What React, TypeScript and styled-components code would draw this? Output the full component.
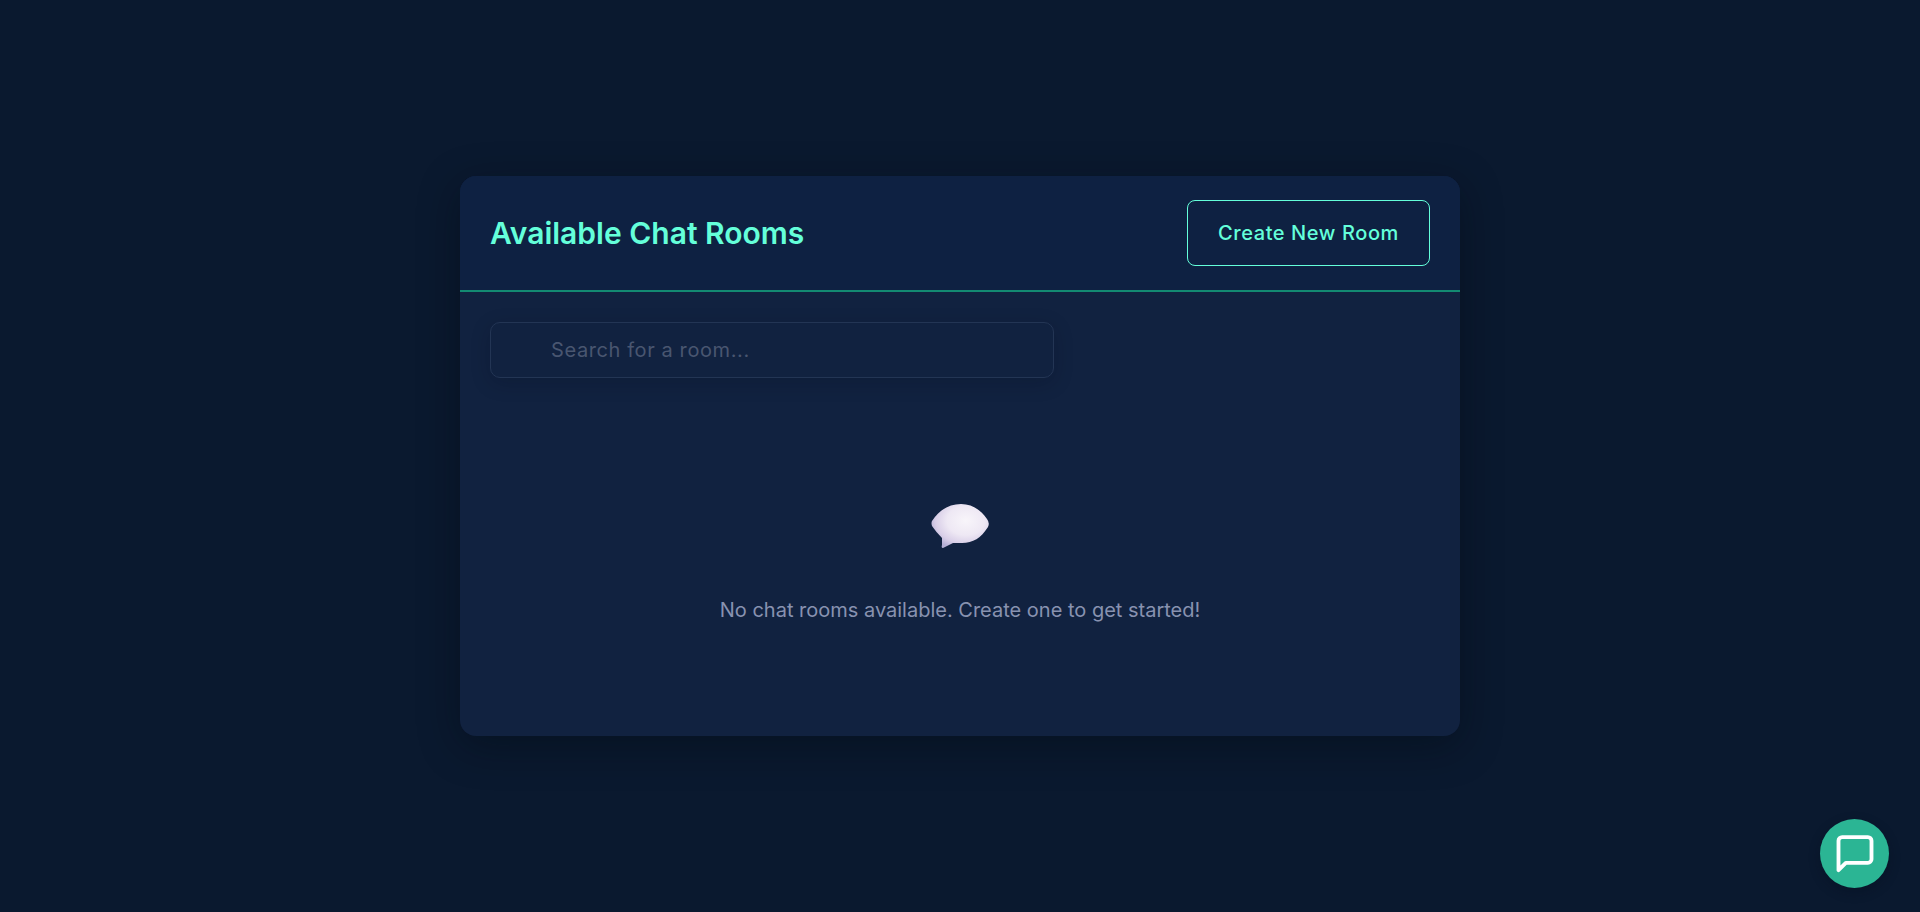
import React from "react";
import styled, { createGlobalStyle } from "styled-components";

const GlobalStyle = createGlobalStyle`
  *, *::before, *::after { box-sizing: border-box; }
  body {
    margin: 0;
    background: #0a192f;
    font-family: Inter, "Liberation Sans", sans-serif;
  }
`;

const Page = styled.main`
  display: flex;
  align-items: center;
  justify-content: center;
  min-height: 100vh;
  padding: 20px;
`;

const Card = styled.section`
  width: 100%;
  max-width: 1000px;
  background: #112240;
  border-radius: 16px;
  overflow: hidden;
  box-shadow: 0 10px 40px rgba(0, 10, 16, 0.4);
`;

const CardHeader = styled.header`
  display: flex;
  align-items: center;
  justify-content: space-between;
  gap: 24px;
  padding: 24px 30px;
  background: #0e2142;
  border-bottom: 2px solid #138a72;
`;

const Title = styled.h1`
  margin: 0;
  color: #64ffda;
  font-size: 30px;
  font-weight: 600;
  line-height: 40px;
`;

const CreateButton = styled.button`
  height: 66px;
  padding: 0 30px;
  border: 1px solid #64ffda;
  border-radius: 8px;
  background: transparent;
  color: #64ffda;
  font: 500 20px/24px Inter, "Liberation Sans", sans-serif;
  letter-spacing: 0.03em;
  cursor: pointer;
`;

const CardBody = styled.div`
  padding: 30px;
`;

const SearchInput = styled.input`
  display: block;
  width: 60%;
  height: 56px;
  padding: 0 60px;
  border: 1px solid #233554;
  border-radius: 10px;
  outline: none;
  background: #112240;
  box-shadow: 0 5px 20px rgba(2, 12, 27, 0.2);
  color: #ccd6f6;
  font: 400 20px/24px Inter, "Liberation Sans", sans-serif;
  letter-spacing: 0.03em;

  &::placeholder {
    color: #495670;
    opacity: 1;
  }
`;

const EmptyState = styled.div`
  display: flex;
  flex-direction: column;
  align-items: center;
  gap: 45px;
  padding: 125px 20px 80px;
`;

const EmptyText = styled.p`
  margin: 0;
  color: #8892b0;
  font-size: 20px;
  line-height: 32px;
  text-align: center;
`;

const ChatFab = styled.button`
  position: fixed;
  right: 31px;
  bottom: 24px;
  display: flex;
  align-items: center;
  justify-content: center;
  width: 69px;
  height: 69px;
  padding: 0;
  border: 0;
  border-radius: 50%;
  background: #2bb594;
  color: #ffffff;
  box-shadow: 0 4px 12px rgba(2, 12, 27, 0.3);
  cursor: pointer;
`;

function SpeechBalloon() {
  return (
    <svg width="58" height="46" viewBox="0 0 58 46" aria-hidden="true">
      <defs>
        <radialGradient id="balloon" cx="0.6" cy="0.38" r="0.66">
          <stop offset="0" stopColor="#f8f5fa" />
          <stop offset="0.5" stopColor="#eee8f4" />
          <stop offset="0.8" stopColor="#d9cfe8" />
          <stop offset="1" stopColor="#b5afd6" />
        </radialGradient>
      </defs>
      <path
        d="M30 1C41 1 50 7 56 16Q59 20 57 24C50 35 42 40 31 40Q26 40 22 40Q18 42 12 45Q10 45 11 42V35Q5 29 1 23Q0 20 1 18C8 7 18 1 30 1Z"
        fill="url(#balloon)"
      />
    </svg>
  );
}

function MessageIcon() {
  return (
    <svg
      width="44"
      height="44"
      viewBox="0 0 24 24"
      fill="none"
      stroke="currentColor"
      strokeWidth="2.1"
      strokeLinecap="round"
      strokeLinejoin="round"
      aria-hidden="true"
    >
      <path d="M21 14.8a2 2 0 0 1-2 2H7l-4 4V4.8a2 2 0 0 1 2-2h14a2 2 0 0 1 2 2z" />
    </svg>
  );
}

export default function App() {
  return (
    <>
      <GlobalStyle />
      <Page>
        <Card>
          <CardHeader>
            <Title>Available Chat Rooms</Title>
            <CreateButton type="button">Create New Room</CreateButton>
          </CardHeader>
          <CardBody>
            <SearchInput type="text" aria-label="Search for a room" placeholder="Search for a room..." />
            <EmptyState>
              <SpeechBalloon />
              <EmptyText>No chat rooms available. Create one to get started!</EmptyText>
            </EmptyState>
          </CardBody>
        </Card>
      </Page>
      <ChatFab type="button" aria-label="Open chat">
        <MessageIcon />
      </ChatFab>
    </>
  );
}
